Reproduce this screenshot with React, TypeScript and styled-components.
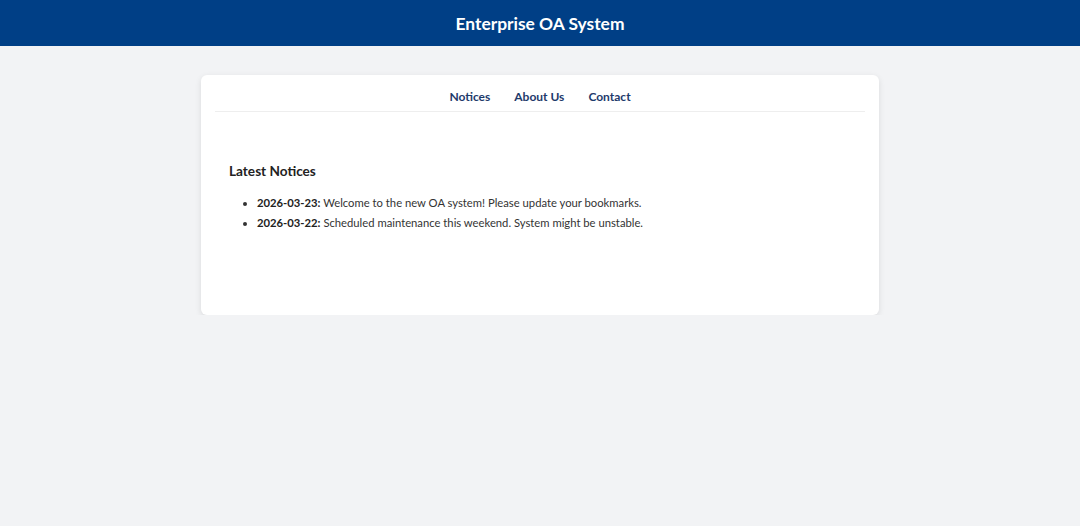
import React from "react";
import styled, { createGlobalStyle } from "styled-components";

const GlobalStyle = createGlobalStyle`
  html, body {
    margin: 0;
    padding: 0;
    background: #f2f3f5;
    font-family: Lato, "Noto Sans", Arial, sans-serif;
    color: #333;
  }
`;

const Header = styled.header`
  height: 46px;
  background: #003f86;
  display: flex;
  align-items: center;
  justify-content: center;
`;

const Title = styled.h1`
  margin: 0;
  color: #fff;
  font-size: 17.4px;
  font-weight: 700;
`;

const Main = styled.main`
  display: flex;
  justify-content: center;
  padding-top: 29px;
`;

const Card = styled.section`
  width: 678px;
  box-sizing: border-box;
  background: #fff;
  border-radius: 6px;
  box-shadow: 0 2px 6px rgba(0, 0, 0, 0.1);
  padding: 14px;
  min-height: 240px;
`;

const Nav = styled.nav`
  display: flex;
  justify-content: center;
  gap: 24px;
  padding-bottom: 6px;
  border-bottom: 1px solid #eeeeee;
`;

const NavLink = styled.a`
  font-size: 12px;
  line-height: 16px;
  font-weight: 700;
  color: #1e3a6b;
  text-decoration: none;
`;

const Content = styled.div`
  padding: 49px 14px 0;
`;

const Heading = styled.h3`
  margin: 0;
  font-size: 13.6px;
  line-height: 20px;
  font-weight: 700;
  color: #222;
`;

const List = styled.ul`
  margin: 12px 0 0;
  padding-left: 28px;
`;

const Item = styled.li`
  font-size: 11.25px;
  line-height: 20px;
  color: #333;
`;

const Date = styled.strong`
  color: #222;
`;

const notices = [
  { date: "2026-03-23", text: "Welcome to the new OA system! Please update your bookmarks." },
  { date: "2026-03-22", text: "Scheduled maintenance this weekend. System might be unstable." },
];

export default function App() {
  return (
    <>
      <GlobalStyle />
      <Header>
        <Title>Enterprise OA System</Title>
      </Header>
      <Main>
        <Card>
          <Nav>
            <NavLink href="#">Notices</NavLink>
            <NavLink href="#">About Us</NavLink>
            <NavLink href="#">Contact</NavLink>
          </Nav>
          <Content>
            <Heading>Latest Notices</Heading>
            <List>
              {notices.map((n) => (
                <Item key={n.date}>
                  <Date>{n.date}:</Date> {n.text}
                </Item>
              ))}
            </List>
          </Content>
        </Card>
      </Main>
    </>
  );
}
